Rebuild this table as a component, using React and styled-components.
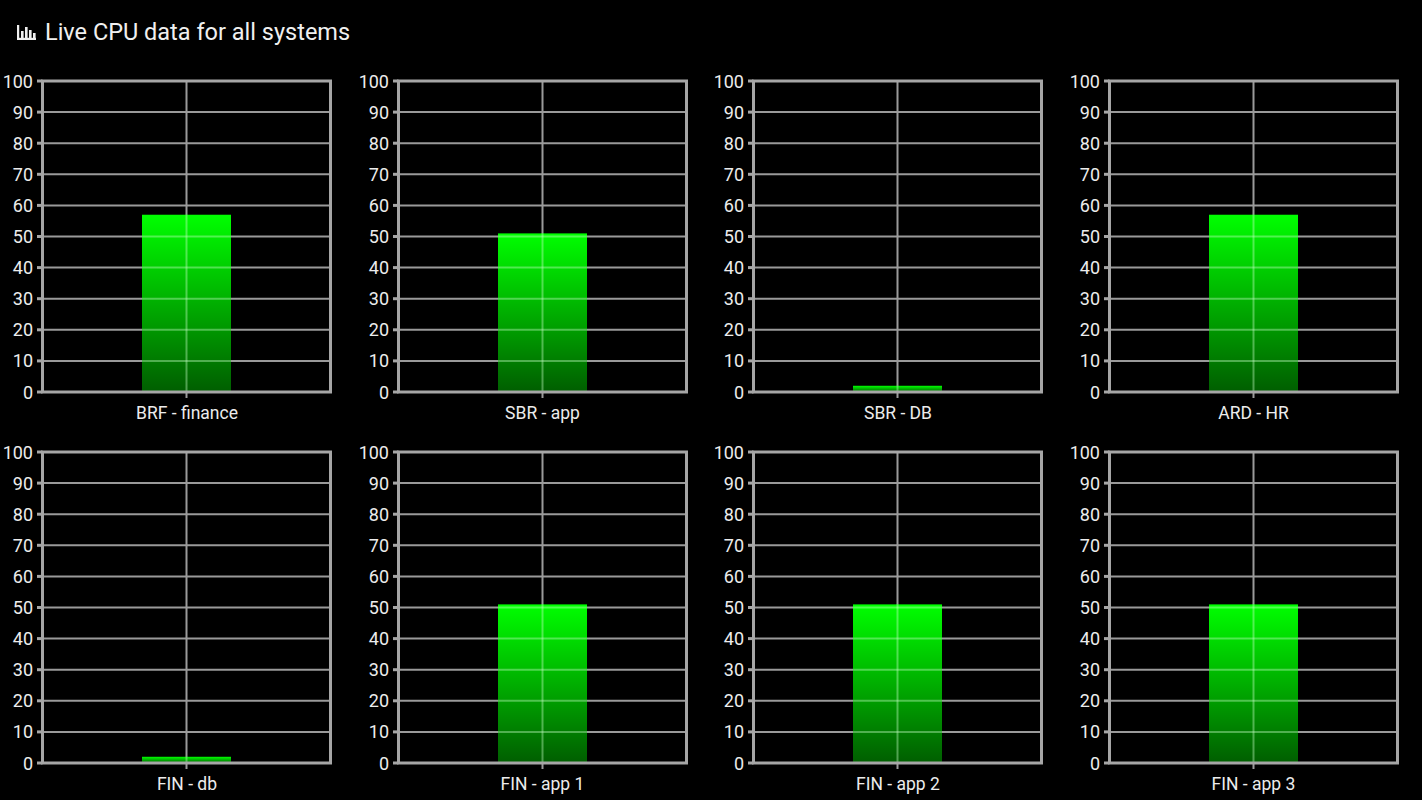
import styled, { createGlobalStyle } from "styled-components";

const GlobalStyle = createGlobalStyle`
  html, body {
    margin: 0;
    padding: 0;
    background: #000;
  }
  body {
    font-family: Roboto, "Noto Sans", "Liberation Sans", sans-serif;
    color: #ececec;
  }
`;

const Page = styled.main`
  width: 1422px;
  height: 800px;
  background: #000;
  overflow: hidden;
`;

const Header = styled.h1`
  margin: 0;
  height: 64px;
  padding-left: 17px;
  display: flex;
  align-items: center;
  gap: 9px;
  font-size: 23.5px;
  font-weight: 400;
  color: #f0f0f0;
`;

const Grid = styled.div`
  margin-top: 6px;
  display: grid;
  grid-template-columns: repeat(4, 1fr);
  row-gap: 19px;
`;

const Card = styled.figure`
  margin: 0;
  display: flex;
  flex-direction: column;
`;

const Caption = styled.figcaption`
  width: 290px;
  margin-left: 42px;
  height: 16px;
  line-height: 14px;
  text-align: center;
  font-size: 17.5px;
  color: #ececec;
`;

const systems = [
  { name: "BRF - finance", cpu: 57 },
  { name: "SBR - app", cpu: 51 },
  { name: "SBR - DB", cpu: 2 },
  { name: "ARD - HR", cpu: 57 },
  { name: "FIN - db", cpu: 2 },
  { name: "FIN - app 1", cpu: 51 },
  { name: "FIN - app 2", cpu: 51 },
  { name: "FIN - app 3", cpu: 51 },
];

function ChartIcon() {
  return (
    <svg width="19" height="15" viewBox="0 0 19 15" aria-hidden="true">
      <rect x="0" y="0" width="2.2" height="15" fill="#f0f0f0" />
      <rect x="0" y="12.8" width="19" height="2.2" fill="#f0f0f0" />
      <rect x="4" y="6" width="2.6" height="7" fill="#f0f0f0" />
      <rect x="8" y="2" width="2.6" height="11" fill="#f0f0f0" />
      <rect x="12" y="5" width="2.6" height="8" fill="#f0f0f0" />
      <rect x="16" y="8" width="2.6" height="5" fill="#f0f0f0" />
    </svg>
  );
}

const L = 42.5;
const R = 330.5;
const T = 11;
const B = 322;

function BarChart({ id, value }) {
  const cx = (L + R) / 2;
  const bw = 89;
  const bx = cx - bw / 2;
  const by = B - (value / 100) * (B - T);
  const levels = Array.from({ length: 11 }, (_, i) => i * 10);
  return (
    <svg width="355" height="336" viewBox="0 0 355 336" role="img" aria-label={`${value}% CPU`}>
      <defs>
        <linearGradient id={`g-${id}`} x1="0" y1="0" x2="0" y2="1">
          <stop offset="0" stopColor="#00ff00" />
          <stop offset="1" stopColor="#005e00" />
        </linearGradient>
      </defs>
      {levels.map((v) => {
        const y = B - (v / 100) * (B - T);
        return (
          <g key={v}>
            <line x1={L} x2={R} y1={y} y2={y} stroke="#9a9a9a" strokeWidth="2" />
            <line x1={37} x2={L} y1={y} y2={y} stroke="#a6a6a6" strokeWidth="3" />
            <text
              x="33"
              y={y}
              textAnchor="end"
              dominantBaseline="central"
              fontSize="18"
              fill="#ececec"
              fontFamily="Roboto, sans-serif"
            >
              {v}
            </text>
          </g>
        );
      })}
      <line x1={cx} x2={cx} y1={T} y2={B + 6} stroke="#9a9a9a" strokeWidth="2" />
      <rect x={bx} y={by} width={bw} height={B - by} fill={`url(#g-${id})`} />
      {levels
        .filter((v) => B - (v / 100) * (B - T) > by + 1 && v > 0)
        .map((v) => {
          const y = B - (v / 100) * (B - T);
          return (
            <line key={v} x1={bx} x2={bx + bw} y1={y} y2={y} stroke="rgba(200,255,200,0.4)" strokeWidth="2" />
          );
        })}
      <line x1={cx} x2={cx} y1={by} y2={B} stroke="rgba(200,255,200,0.4)" strokeWidth="2" />
      <rect x={L} y={T} width={R - L} height={B - T} fill="none" stroke="#a6a6a6" strokeWidth="3" />
    </svg>
  );
}

export default function App() {
  return (
    <Page>
      <GlobalStyle />
      <Header>
        <ChartIcon />
        Live CPU data for all systems
      </Header>
      <Grid>
        {systems.map((s, i) => (
          <Card key={s.name}>
            <BarChart id={i} value={s.cpu} />
            <Caption>{s.name}</Caption>
          </Card>
        ))}
      </Grid>
    </Page>
  );
}
